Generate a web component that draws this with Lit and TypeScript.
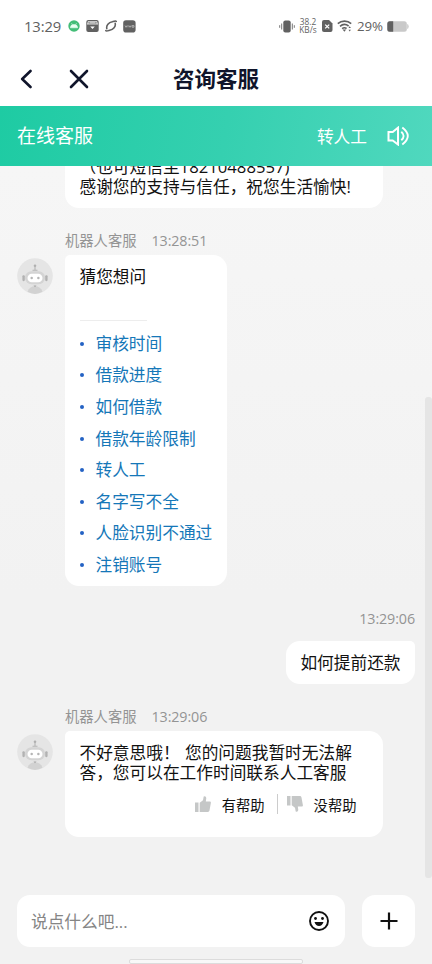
import { LitElement, html, css, svg } from "lit";
import { customElement, property } from "lit/decorators.js";

const QUESTIONS = ["审核时间", "借款进度", "如何借款", "借款年龄限制", "转人工", "名字写不全", "人脸识别不通过", "注销账号"];

@customElement("status-bar")
class StatusBar extends LitElement {
  static styles = css`
    :host { display: flex; align-items: center; height: 51px; padding: 1px 23px 0 24px; box-sizing: border-box; color: #616161; font-family: "Open Sans", "Noto Sans CJK SC", sans-serif; }
    svg { display: block; flex: none; }
    .clock { font-size: 14.8px; line-height: 20px; width: 44px; font-weight: 500; letter-spacing: -0.1px; white-space: nowrap; margin-top: -1px; }
    .left { display: flex; gap: 6px; flex: 1; align-items: center; }
    .rate { font-size: 8.3px; line-height: 8px; font-weight: 500; width: 20px; text-align: center; margin: 0 4px 0 3px; white-space: nowrap; }
    .pct { font-size: 13.3px; line-height: 16px; width: 26px; margin: 0 4px 0 4px; letter-spacing: -0.1px; font-weight: 500; white-space: nowrap; }
    .wifi { margin-left: 4px; }
  `;
  render() {
    return html`
      <span class="clock">13:29</span>
      <div class="left">
        <svg width="12" height="12" viewBox="0 0 12 12"><circle cx="6" cy="6" r="5.7" fill="#43bd77"/><path d="M2.4 7.8a3.6 3.3 0 0 1 7.2 0ZM3.5 3.2l1 1.6M8.5 3.2l-1 1.6" fill="#e9fff1" stroke="#e9fff1" stroke-width=".6"/></svg>
        <svg width="13" height="12" viewBox="0 0 13 12"><rect x=".3" y="0" width="12.4" height="12" rx="2" fill="#616161"/><path d="M2 4V1.7h9V4M1 4h11M3.5 2.8h6" stroke="#fff" stroke-width=".8" fill="none"/><path d="M4.2 6.5 6.5 9l2.3-2.5Z" fill="#fff"/></svg>
        <svg width="12" height="12" viewBox="0 0 12 12"><path d="M1.8 8.6C1.1 5.5 3.6 2.3 7.3 1.7 8.6 1.4 10.8.6 11.2 1.4M10.2 3.4C10.9 6.5 8.4 9.7 4.7 10.3 3.4 10.6 1.2 11.4.8 10.6" fill="none" stroke="#616161" stroke-width="1.6" stroke-linecap="round"/></svg>
        <svg width="13" height="13" viewBox="0 0 13 13"><rect x=".2" y=".2" width="12.4" height="12.4" rx="2.8" fill="#616161"/><path d="m2 5.5 1 1.8 1-1.8M5 5.5v1.8M6 5.5l1 1.8 1-1.8M9 5.6h2v1.6H9Z" stroke="#c8c8c8" stroke-width=".7" fill="none"/></svg>
      </div>
      <svg width="16" height="13" viewBox="0 0 16 13"><rect x="4.3" y=".5" width="7.4" height="12" rx="2" fill="#616161"/><path d="M2.7 3.5v6M.7 5.2v2.6M13.3 3.5v6M15.3 5.2v2.6" stroke="#777" stroke-width="1"/></svg>
      <div class="rate">38.2<br />KB/s</div>
      <svg width="11" height="12" viewBox="0 0 11 12"><path d="M2 0h5l3.5 3.5V10a2 2 0 0 1-2 2H2a2 2 0 0 1-2-2V2a2 2 0 0 1 2-2Z" fill="#616161"/><path d="m3.2 4.6 4 3.8m0-3.8-4 3.8" stroke="#fff" stroke-width="1.3"/></svg>
      <svg class="wifi" width="16" height="12" viewBox="0 0 16 12"><path d="M.8 3.7a10 10 0 0 1 13.4 0M3 6.3a6.8 6.8 0 0 1 8.6-.3M5.1 8.6a4 4 0 0 1 4.5-.1" stroke="#616161" stroke-width="1.6" fill="none"/><path d="M5.6 9.6h3.6L7.4 11.8ZM11.5 8l1.2-1.7L13.9 8Zm0 1.7 1.2 1.7 1.2-1.7Z" fill="#616161"/></svg>
      <span class="pct">29%</span>
      <svg width="22" height="11" viewBox="0 0 22 11"><rect x=".3" y=".3" width="19.5" height="10.4" rx="2.5" fill="#c9c9c9"/><path d="M20.2 3q1.5.3 1.5 2.5T20.2 8Z" fill="#c9c9c9"/><path d="M6.2.3v10.4H2.8A2.5 2.5 0 0 1 .3 8.2V2.8A2.5 2.5 0 0 1 2.8.3Z" fill="#616161"/></svg>
    `;
  }
}

@customElement("robot-avatar")
class RobotAvatar extends LitElement {
  static styles = css`:host { display: block; width: 36px; height: 36px; flex: none; } svg { display: block; }`;
  render() {
    return html`<svg width="36" height="36" viewBox="0 0 36 36">
      <circle cx="18" cy="18" r="17.8" fill="#e5e5e5"/>
      <path d="M10.5 33.8q2-5.5 7.5-5.5t7.5 5.5Q18 38 10.5 33.8Z" fill="#d2d2d2"/>
      <path d="M16.5 27.5h3L18 29.3Z" fill="#a5a5a5"/>
      <path d="M18 8v4M15.5 12.2h5" stroke="#b5b5b5" stroke-width="1.1"/><circle cx="18" cy="7.8" r="1.3" fill="#b0b0b0"/>
      <rect x="5.4" y="17.2" width="2.4" height="6" rx="1.1" fill="#b2b2b2"/><rect x="28.2" y="17.2" width="2.4" height="6" rx="1.1" fill="#b2b2b2"/>
      <rect x="8" y="13.2" width="20" height="13" rx="6.3" fill="#d4d4d4"/>
      <rect x="10.5" y="15.7" width="15" height="8.6" rx="4.3" fill="#fff"/>
      <circle cx="14.7" cy="19.9" r="1.25" fill="#b5b5b5"/><circle cx="21.4" cy="19.9" r="1.25" fill="#b5b5b5"/>
    </svg>`;
  }
}

@customElement("bot-message")
class BotMessage extends LitElement {
  @property() time = "";
  static styles = css`
    :host { display: flex; flex-direction: column; align-items: flex-start; }
    .meta { display: flex; gap: 15px; margin-left: 65px; height: 20px; line-height: 20px; font-size: 14.3px; color: #949494; white-space: nowrap; }
    .time { letter-spacing: -0.1px; }
    .row { display: flex; align-items: flex-start; margin-top: 4px; padding-left: 17px; gap: 12px; }
    robot-avatar { margin-top: 3px; }
  `;
  render() {
    return html`
      <div class="meta"><span>机器人客服</span><span class="time">${this.time}</span></div>
      <div class="row"><robot-avatar></robot-avatar><slot></slot></div>
    `;
  }
}

const thumb = svg`<path d="M0 6.5h3.5V16H0ZM4.7 6.8 8 4.2 8.7.6Q10.8-.4 11.3 2L10.8 5.6H15Q16 5.6 15.9 6.8L14.5 14.6Q14.2 16 12.9 16H4.7Z" fill="#c5c7c7"/>`;

@customElement("app-root")
class AppRoot extends LitElement {
  static styles = css`
    :host { display: flex; flex-direction: column; position: relative; width: 432px; height: 964px; overflow: hidden; background: #fff; font-family: "Open Sans", "Noto Sans CJK SC", sans-serif; font-weight: 400; color: #111; }
    * { box-sizing: border-box; }
    svg { display: block; flex: none; }
    status-bar { flex: none; }
    .nav { display: grid; grid-template-columns: 153px auto 1fr; align-items: center; height: 55px; flex: none; padding-left: 20px; color: #10152b; }
    .nav-icons { display: flex; gap: 37px; align-items: center; }
    .title { font-size: 21.5px; font-weight: 700; line-height: 30px; }
    .service { display: flex; align-items: center; height: 60px; flex: none; padding: 0 22px 0 17px; color: #fff; background: linear-gradient(100deg, #1ecba3, #35d0b0 52%, #50d8be); }
    .service-name { flex: 1; font-size: 19px; line-height: 28px; }
    .human { font-size: 16.7px; margin-right: 20px; }
    .chat { flex: 1; min-height: 0; display: flex; flex-direction: column; overflow: hidden; background: linear-gradient(#f6f6f6, #f2f2f2 60%); }
    .card { background: #fff; border-radius: 5px 14px 14px 14px; font-size: 16.7px; line-height: 20px; }
    .thanks { width: 318px; height: 66px; margin: -24px 0 0 65px; padding: 15px 14.5px 0; flex: none; white-space: nowrap; }
    .first { margin-top: 23px; }
    .guess { width: 162px; height: 331px; padding: 12px 14.5px 0; }
    .rule { width: 67px; height: 1px; background: #ededed; margin: 33px 0 7px; }
    .questions { display: flex; flex-direction: column; list-style: none; margin: 0; padding: 0; }
    .question { display: flex; align-items: center; gap: 12px; height: 31.6px; color: #1577b8; white-space: nowrap; }
    .dot { width: 4px; height: 4px; border-radius: 50%; background: #2462c4; flex: none; }
    .mine { display: flex; flex-direction: column; align-items: flex-end; padding-right: 17px; margin-top: 23px; }
    .mine-time { color: #949494; font-size: 14.3px; line-height: 20px; height: 20px; letter-spacing: -0.1px; }
    .mine-card { width: 129px; height: 43px; line-height: 43px; margin-top: 12px; border-radius: 14px 5px 14px 14px; text-align: center; }
    .second { margin-top: 23px; }
    .answer { width: 318px; height: 106px; padding: 12px 14.5px 0; word-spacing: 1px; }
    .line { white-space: nowrap; height: 20px; }
    .feedback { display: flex; align-items: center; height: 20px; margin: 11px 12px 0 0; justify-content: flex-end; font-size: 14.3px; }
    .label { margin: 4px 0 0 11px; }
    .bar { width: 1px; height: 20px; background: #ccc; margin: 0 9px 0 12px; }
    .down { transform: scaleY(-1); }
    .composer { display: flex; gap: 17px; padding: 15px 17px 17px; flex: none; background: #f2f2f2; }
    .field { flex: 1; height: 52px; border-radius: 13px; background: #fff; display: flex; align-items: center; justify-content: space-between; padding: 0 15px 0 14px; }
    .placeholder { font-size: 16.7px; color: #858585; }
    .add { width: 53px; height: 52px; border-radius: 13px; background: #fff; display: grid; place-items: center; }
    .scroll { position: absolute; right: 0; top: 397px; width: 7px; height: 481px; border-radius: 3px; background: #e5e5e5; }
    .home { position: absolute; left: 129px; bottom: 0; width: 174px; height: 5px; border-radius: 2px; background: #f8f8f8; border: 1px solid #dcdcdc; }
  `;
  render() {
    return html`
      <status-bar></status-bar>
      <div class="nav">
        <div class="nav-icons">
          <svg width="12" height="20" viewBox="0 0 12 20"><path d="M10.5 2 2.2 10l8.3 8" fill="none" stroke="currentColor" stroke-width="2.6" stroke-linecap="round" stroke-linejoin="round"/></svg>
          <svg width="20" height="20" viewBox="0 0 20 20"><path d="m2 2 16 16M18 2 2 18" stroke="currentColor" stroke-width="2.6" stroke-linecap="round"/></svg>
        </div>
        <div class="title">咨询客服</div>
      </div>
      <div class="service">
        <div class="service-name">在线客服</div>
        <div class="human">转人工</div>
        <svg width="23" height="20" viewBox="0 0 23 20"><path d="M1.5 6v8.5h4.2L11 18.5V1.7L5.7 6Z" fill="none" stroke="#fff" stroke-width="2"/><path d="M14.3 5.7q4.6 4.3 0 8.6M15.3 1.5q11 8.5 0 17" fill="none" stroke="#fff" stroke-width="1.9"/></svg>
      </div>
      <div class="chat">
        <div class="card thanks">
          <div class="line">（也可短信至18210488557)</div>
          <div class="line">感谢您的支持与信任，祝您生活愉快!</div>
        </div>
        <bot-message class="first" time="13:28:51">
          <div class="card guess">
            <div class="line">猜您想问</div>
            <div class="rule"></div>
            <ul class="questions">${QUESTIONS.map((q) => html`<li class="question"><span class="dot"></span>${q}</li>`)}</ul>
          </div>
        </bot-message>
        <div class="mine">
          <div class="mine-time">13:29:06</div>
          <div class="card mine-card">如何提前还款</div>
        </div>
        <bot-message class="second" time="13:29:06">
          <div class="card answer">
            <div class="line">不好意思哦！ 您的问题我暂时无法解</div>
            <div class="line">答，您可以在工作时间联系人工客服</div>
            <div class="feedback">
              <svg width="16" height="16" viewBox="0 0 16 16">${thumb}</svg><span class="label">有帮助</span>
              <span class="bar"></span>
              <svg class="down" width="16" height="16" viewBox="0 0 16 16">${thumb}</svg><span class="label">没帮助</span>
            </div>
          </div>
        </bot-message>
      </div>
      <div class="composer">
        <div class="field">
          <span class="placeholder">说点什么吧...</span>
          <svg width="22" height="22" viewBox="0 0 22 22"><circle cx="11" cy="11" r="9" fill="none" stroke="#111" stroke-width="1.9"/><circle cx="7.5" cy="8.5" r="1.4" fill="#111"/><circle cx="14.5" cy="8.5" r="1.4" fill="#111"/><path d="M6.5 12h9q-1.3 4-4.5 4t-4.5-4Z" fill="#111"/></svg>
        </div>
        <div class="add"><svg width="18" height="18" viewBox="0 0 18 18"><path d="M9 .5v17M.5 9h17" stroke="#111" stroke-width="2.2"/></svg></div>
      </div>
      <div class="scroll"></div>
      <div class="home"></div>
    `;
  }
}
